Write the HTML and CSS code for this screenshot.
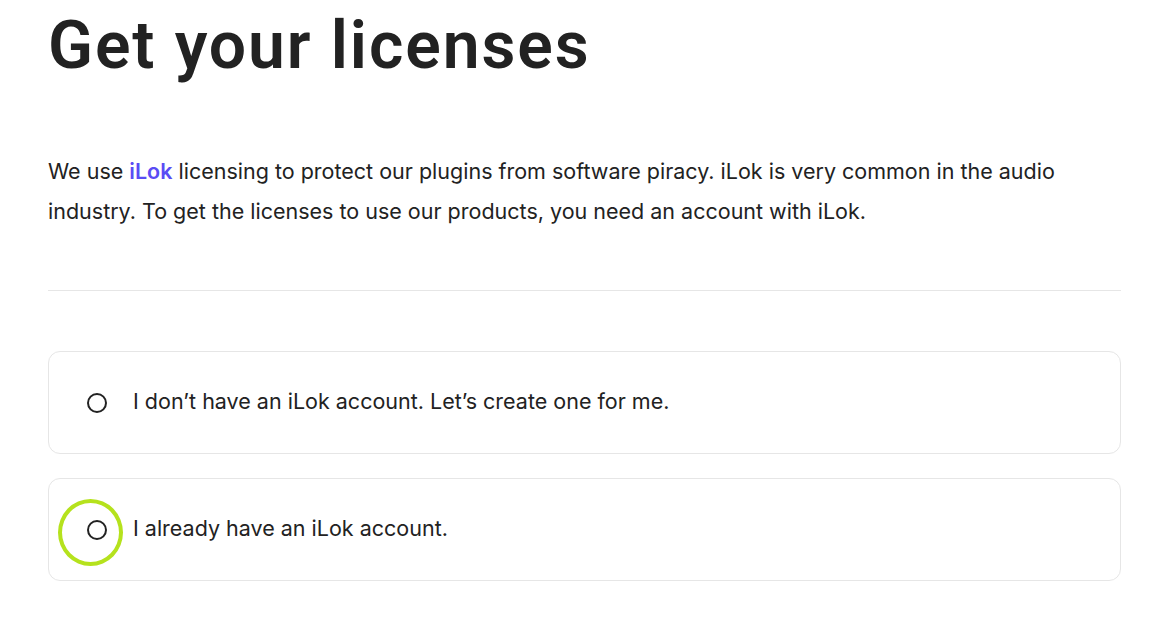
FILE: index.html
```html
<!DOCTYPE html>
<html lang="en">
<head>
<meta charset="utf-8">
<title>Get your licenses</title>
<link rel="stylesheet" href="styles.css">
</head>
<body>
<main class="page">
  <h1 class="title">Get your licenses</h1>
  <p class="intro">We use <a class="link" href="#">iLok</a> licensing to protect our plugins from software piracy. iLok is very common in the audio industry. To get the licenses to use our products, you need an account with iLok.</p>
  <hr class="divider">
  <div class="options">
    <label class="option">
      <span class="radio"></span>
      <span class="option-text">I don’t have an iLok account. Let’s create one for me.</span>
    </label>
    <label class="option">
      <span class="radio-wrap"><span class="radio"></span><span class="highlight"></span></span>
      <span class="option-text">I already have an iLok account.</span>
    </label>
  </div>
</main>
</body>
</html>
```
FILE: styles.css
```css
html, body {
  margin: 0;
  padding: 0;
  background: #ffffff;
}
body {
  font-family: Inter, Roboto, "Noto Sans", sans-serif;
  color: #222222;
}
.page {
  width: 1073px;
  padding: 0 0 0 48px;
}
.title {
  margin: 6px 0 0 0;
  font-family: Roboto, "Noto Sans", sans-serif;
  font-size: 66px;
  line-height: 80px;
  font-weight: 600;
  letter-spacing: 1.9px;
  color: #222222;
}
.intro {
  max-width: 1025px;
  margin: 65px 0 0 0;
  font-size: 21.5px;
  line-height: 40px;
  color: #222222;
}
.link {
  color: #5a4cf4;
  font-weight: 600;
  text-decoration: none;
}
.divider {
  margin: 59px 0 0 0;
  border: 0;
  border-top: 1px solid #e6e6e6;
  height: 0;
}
.options {
  margin-top: 60px;
  display: flex;
  flex-direction: column;
  gap: 24px;
}
.option {
  display: flex;
  align-items: center;
  gap: 26px;
  height: 103px;
  padding: 0 0 0 38px;
  border: 1px solid #e6e6e6;
  border-radius: 12px;
  box-sizing: border-box;
}
.radio-wrap {
  position: relative;
  display: block;
  width: 20px;
  height: 20px;
  flex: none;
}
.radio {
  display: block;
  width: 20px;
  height: 20px;
  border: 2px solid #222222;
  border-radius: 50%;
  box-sizing: border-box;
  flex: none;
}
.highlight {
  position: absolute;
  left: -29px;
  top: -21px;
  width: 65px;
  height: 67px;
  border: 4px solid #b5e21d;
  border-radius: 50%;
  box-sizing: border-box;
}
.option-text {
  font-size: 21.5px;
  padding-bottom: 3px;
  color: #222222;
}
```
